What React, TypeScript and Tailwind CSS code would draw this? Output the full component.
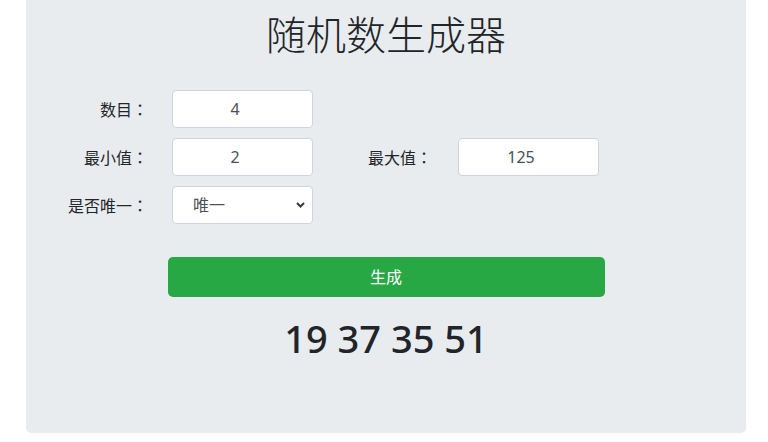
import { useState } from "react";

const numFont = { fontFamily: '"Noto Sans", "Noto Sans CJK SC", sans-serif' };

function NumberField({ value, onChange }: { value: string; onChange: (v: string) => void }) {
  return (
    <input
      type="text"
      value={value}
      onChange={(e) => onChange(e.target.value)}
      className="h-[38px] w-[141px] rounded-[4px] border border-[#ced4da] bg-white pl-3 pr-[27px] text-center text-[16px] text-[#495057] outline-none"
    />
  );
}

function Label({ text, className }: { text: string; className: string }) {
  return (
    <label className={className} style={{ fontFamily: '"Noto Sans CJK TC", "Noto Sans CJK SC", sans-serif' }}>
      {text}
    </label>
  );
}

export default function App() {
  const [count, setCount] = useState("4");
  const [min, setMin] = useState("2");
  const [max, setMax] = useState("125");
  const [unique, setUnique] = useState("unique");
  const [result] = useState([19, 37, 35, 51]);

  return (
    <div
      className="min-h-[442px] bg-white text-[#212529]"
      style={{ fontFamily: '"Noto Sans", "Noto Sans CJK SC", sans-serif' }}
    >
      <div className="ml-[26px] flex h-[433px] w-[720px] flex-col rounded-b-[5px] bg-[#e9ecef]">
        <h1 className="pt-[9px] text-center text-[40px] font-light leading-[48px] [font-family:'Noto_Sans_CJK_SC',sans-serif]">
          随机数生成器
        </h1>

        <div className="mt-[33px] flex flex-col gap-[10px] text-[16px]">
          <div className="flex items-center">
            <Label text="数目：" className="w-[122px] text-right" />
            <div className="ml-[24px]">
              <NumberField value={count} onChange={setCount} />
            </div>
          </div>

          <div className="flex items-center">
            <Label text="最小值：" className="w-[122px] text-right" />
            <div className="ml-[24px]">
              <NumberField value={min} onChange={setMin} />
            </div>
            <Label text="最大值：" className="w-[119px] text-right" />
            <div className="ml-[26px]">
              <NumberField value={max} onChange={setMax} />
            </div>
          </div>

          <div className="flex items-center">
            <Label text="是否唯一：" className="w-[122px] text-right" />
            <div className="relative ml-[24px] w-[141px]">
              <select
                value={unique}
                onChange={(e) => setUnique(e.target.value)}
                className="h-[38px] w-full appearance-none rounded-[4px] border border-[#ced4da] bg-white pl-[20px] pr-8 text-[16px] text-[#495057] outline-none"
              >
                <option value="unique">唯一</option>
                <option value="repeat">可重复</option>
              </select>
              <svg
                className="pointer-events-none absolute right-[8px] top-1/2 -translate-y-1/2"
                width="9"
                height="6"
                viewBox="0 0 9 6"
                fill="none"
              >
                <path d="M1 1l3.5 3.5L8 1" stroke="#343a40" strokeWidth="2" />
              </svg>
            </div>
          </div>
        </div>

        <button
          type="button"
          className="mx-auto mt-[33px] h-[40px] w-[437px] rounded-[5px] bg-[#28a745] text-[16px] text-white"
        >
          生成
        </button>

        <div className="mt-[18px] text-center text-[38px] font-medium leading-[46px]" style={numFont}>
          {result.join(" ")}
        </div>
      </div>
    </div>
  );
}
